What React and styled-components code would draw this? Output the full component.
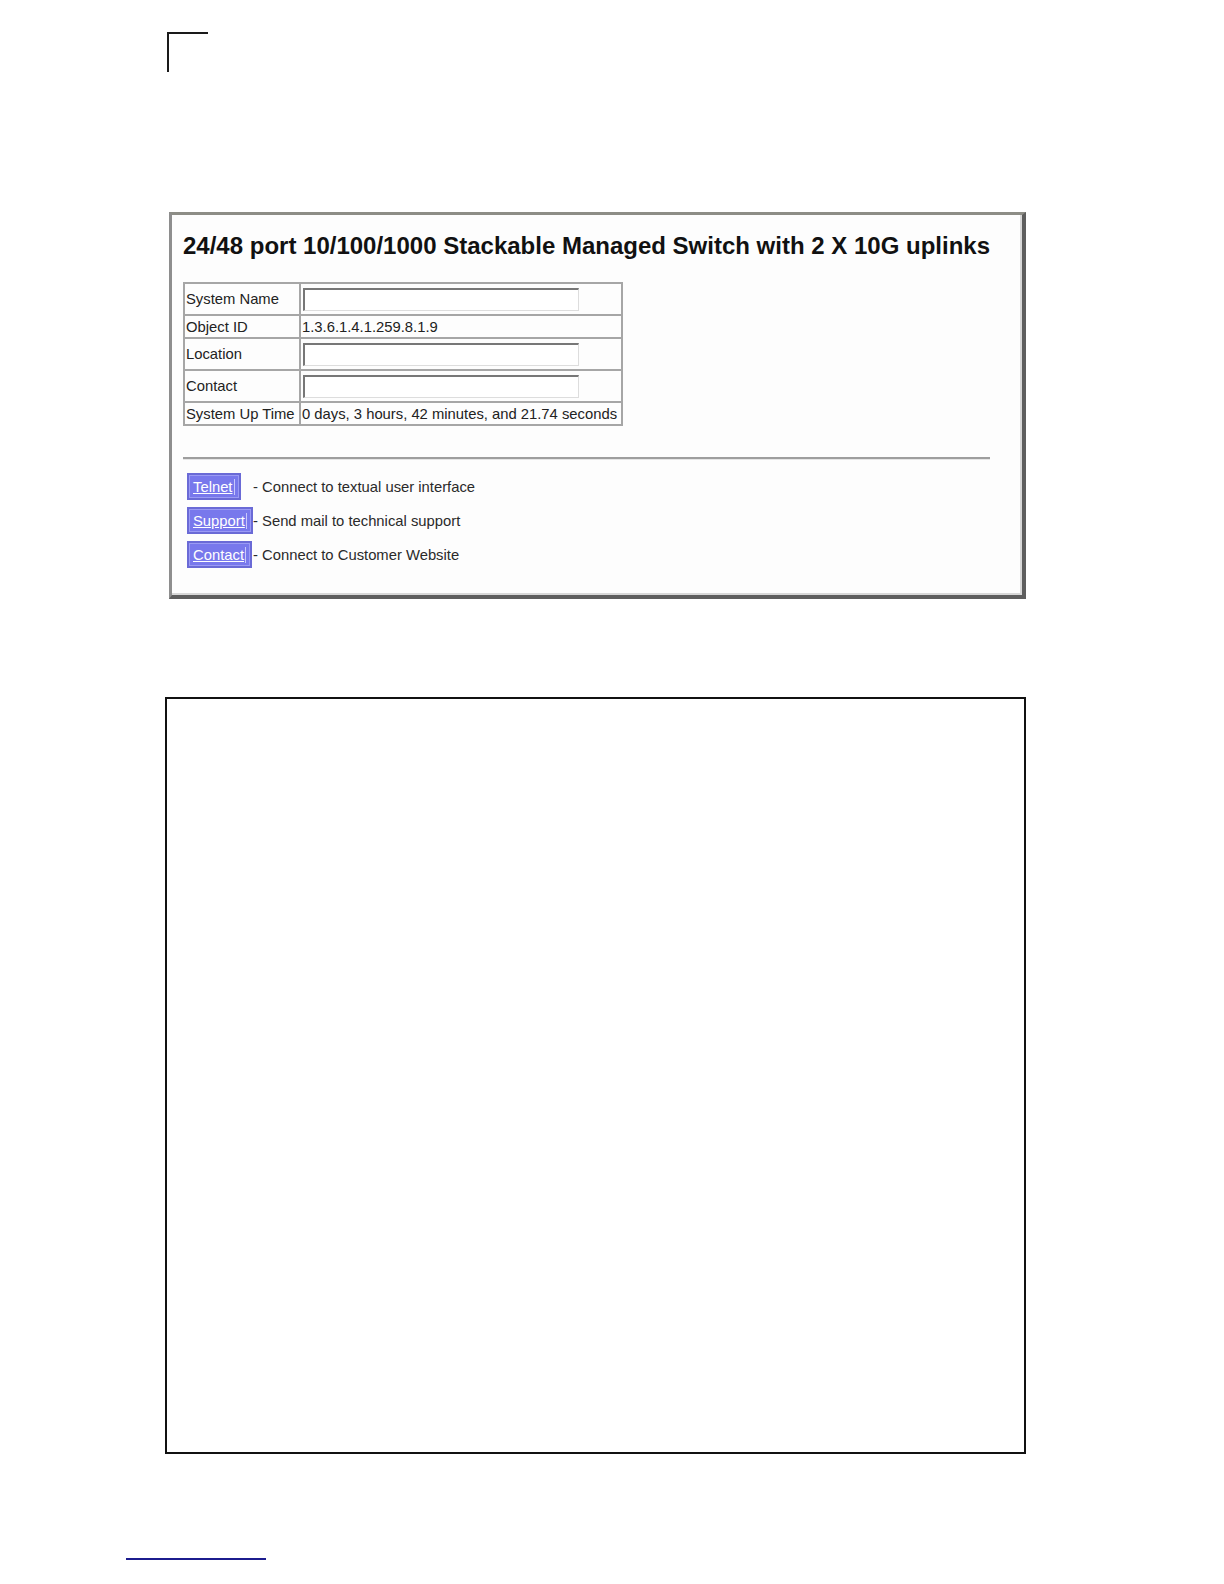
import React from 'react';
import styled, { createGlobalStyle } from 'styled-components';

const GlobalStyle = createGlobalStyle`
    html, body { margin:0; padding:0; background:#fff; overflow:hidden; }
    body { font-family:"Liberation Sans", Arial, sans-serif; color:#111; }
`

const Page = styled.div`
    width:1224px;
    display:flex; flex-direction:column; align-items:flex-start;
`

const CropMark = styled.div`
    margin:32px 0 0 167px; width:41px; height:40px;
    border-top:2px solid #1a1a1a; border-left:2px solid #1a1a1a;
    box-sizing:border-box;
`

const Shot = styled.div`
    margin:140px 0 0 169px; width:857px; height:387px; box-sizing:border-box;
    background:#fdfdfd;
    border-top:3px solid #8d8d86; border-left:3px solid #8e8e8e;
    border-right:4px solid #5e5e5e; border-bottom:4px solid #5e5e5e;
    box-shadow:inset -2px -2px 0 #d8d8d8;
    padding:17px 0 0 11px;
    h1 { margin:0 0 22px; font-size:24px; font-weight:bold; line-height:28px; color:#111; white-space:nowrap; }
`

const InfoTable = styled.table`
    border-collapse:collapse; border:2px solid #a6a6a6;
    font-size:14.8px; color:#222;
    td { border:2px solid #a6a6a6; padding:0 1px; white-space:nowrap; }
    td:first-child { width:112px; }
    td:last-child { width:318px; }
`

const Row = styled.tr`
    height:${p => p.$tall ? '32px' : '23px'};
`

const Field = styled.input`
    display:block; width:276px; height:23px; box-sizing:border-box; margin:0 0 0 1px;
    border-top:2px solid #777; border-left:2px solid #777;
    border-right:1px solid #ddd; border-bottom:1px solid #ddd;
    background:#fff; padding:0;
`

const Rule = styled.hr`
    margin:31px 0 0; width:807px; height:0; border:none;
    border-top:2px solid #9e9e9e; border-bottom:1px solid #e6e6e6;
`

const Links = styled.div`
    margin-top:13px; display:grid; grid-template-columns:70px auto; row-gap:7px;
    align-items:center; font-size:14.8px; color:#2a2a2a;
`

const LinkButton = styled.a`
    justify-self:start; margin-left:4px;
    height:27px; box-sizing:border-box; display:flex; align-items:center;
    padding:0 4px; background:#7878ec;
    border:2px solid #6a6ad6; box-shadow:inset 0 0 0 1px #9a9af4;
    color:#fff; text-decoration:underline; font-size:14.8px; cursor:pointer;
    span { border-right:1px solid #c8c8fb; padding-right:1px; }
`

const Blank = styled.div`
    margin:98px 0 0 165px; width:861px; height:757px; box-sizing:border-box;
    border:2px solid #111;
`

const FootRule = styled.div`
    margin:104px 0 0 126px; width:140px; height:2px; background:#1c1c8e;
`

const rows = [
    { label:'System Name', input:true },
    { label:'Object ID', value:'1.3.6.1.4.1.259.8.1.9' },
    { label:'Location', input:true },
    { label:'Contact', input:true },
    { label:'System Up Time', value:'0 days, 3 hours, 42 minutes, and 21.74 seconds' },
]

const links = [
    { name:'Telnet', text:'- Connect to textual user interface' },
    { name:'Support', text:'- Send mail to technical support' },
    { name:'Contact', text:'- Connect to Customer Website' },
]

const App = () => {
    return (
        <>
            <GlobalStyle />
            <Page>
                <CropMark />
                <Shot>
                    <h1>24/48 port 10/100/1000 Stackable Managed Switch with 2 X 10G uplinks</h1>
                    <InfoTable>
                        <tbody>
                            { rows.map(r => (
                                <Row key={r.label} $tall={r.input}>
                                    <td>{ r.label }</td>
                                    <td>{ r.input ? <Field type="text" /> : r.value }</td>
                                </Row>
                            )) }
                        </tbody>
                    </InfoTable>
                    <Rule />
                    <Links>
                        { links.map(l => (
                            <React.Fragment key={l.name}>
                                <LinkButton><span>{ l.name }</span></LinkButton>
                                <div>{ l.text }</div>
                            </React.Fragment>
                        )) }
                    </Links>
                </Shot>
                <Blank />
                <FootRule />
            </Page>
        </>
    );
};

export default App;
